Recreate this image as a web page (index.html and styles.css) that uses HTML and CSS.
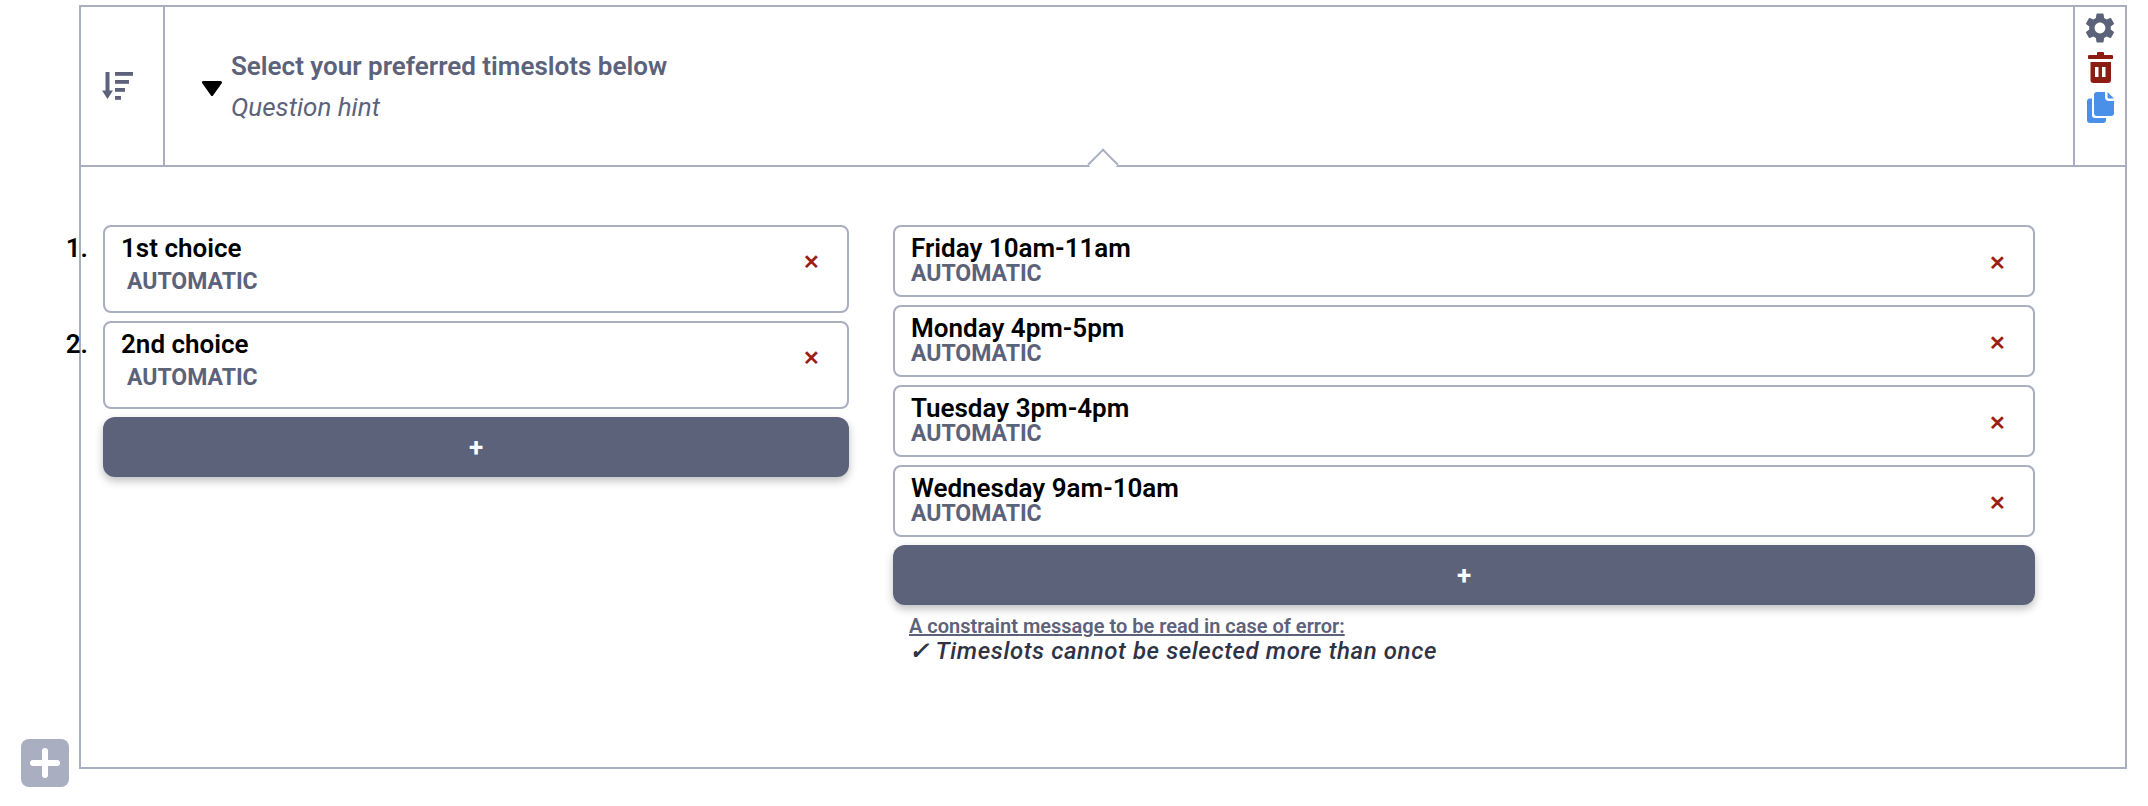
FILE: index.html
```html
<!DOCTYPE html>
<html lang="en">
<head>
<meta charset="utf-8">
<title>Question editor</title>
<link rel="stylesheet" href="styles.css">
</head>
<body>
<div class="page">
  <button class="add-question" aria-label="Add">
    <svg viewBox="0 0 48 48" width="48" height="48"><rect x="21" y="9" width="6" height="30" rx="3"/><rect x="9" y="21" width="30" height="6" rx="3"/></svg>
  </button>
  <section class="question">
    <header class="q-head">
      <div class="q-type">
        <svg viewBox="0 0 32 28" width="32" height="28"><rect x="3.500" y="0" width="4" height="20"/><path d="M0 18.500h11L5.500 27z"/><rect x="13" y="0" width="18" height="3.800"/><rect x="13" y="8" width="14" height="3.800"/><rect x="13" y="16" width="10" height="3.800"/><rect x="13" y="24" width="6" height="3.800"/></svg>
      </div>
      <div class="q-main">
        <svg class="q-caret" viewBox="0 0 20 15" width="20" height="15"><path d="M1.500 1.500h17L10 13.500z"/></svg>
        <div class="q-text">
          <div class="q-label">Select your preferred timeslots below</div>
          <div class="q-hint">Question hint</div>
        </div>
        <span class="q-notch"></span>
      </div>
      <div class="q-tools">
        <svg class="gear" viewBox="0 0 24 24" width="36" height="36"><path d="M19.140 12.940c.04-.3.060-.61.060-.94 0-.32-.02-.64-.07-.94l2.030-1.580c.18-.14.230-.41.120-.61l-1.920-3.320c-.12-.22-.37-.29-.59-.22l-2.390.96c-.5-.38-1.030-.7-1.620-.94l-.36-2.540c-.04-.24-.24-.41-.48-.41h-3.840c-.24 0-.43.170-.47.410l-.36 2.540c-.59.240-1.130.570-1.620.94l-2.390-.96c-.22-.08-.47 0-.59.220L2.740 8.870c-.12.210-.08.470.12.610l2.030 1.580c-.05.3-.09.630-.09.940s.02.640.07.940l-2.030 1.580c-.18.140-.23.410-.12.610l1.920 3.320c.12.220.37.290.59.220l2.390-.96c.5.380 1.030.7 1.620.94l.36 2.540c.05.240.24.410.48.410h3.840c.24 0 .44-.17.47-.41l.36-2.540c.59-.24 1.130-.56 1.620-.94l2.390.96c.22.080.47 0 .59-.22l1.920-3.320c.12-.22.070-.47-.12-.61l-2.010-1.580zM12 15.600c-1.980 0-3.600-1.620-3.600-3.600s1.620-3.600 3.600-3.600 3.600 1.620 3.600 3.600-1.620 3.600-3.600 3.600z"/></svg>
        <svg class="trash" viewBox="0 0 25 31" width="25" height="31"><path d="M10 0h5a1 1 0 0 1 1 1v2h7.500a2 2 0 0 1 0 4H1.500a2 2 0 0 1 0-4H9V1a1 1 0 0 1 1-1z"/><path fill-rule="evenodd" d="M2.500 10H23v18a3 3 0 0 1-3 3H5.500a3 3 0 0 1-3-3zM7 15v10h3.500V15zM14 15v10h3.500V15z"/></svg>
        <svg class="copy" viewBox="0 0 27 31" width="27" height="31"><path d="M3 6.500h2V23a3 3 0 0 0 3 3h11v2a3 3 0 0 1-3 3H3a3 3 0 0 1-3-3V9.500a3 3 0 0 1 3-3z"/><path d="M10 0h8v5a4 4 0 0 0 4 4h5v12a3 3 0 0 1-3 3H10a3 3 0 0 1-3-3V3a3 3 0 0 1 3-3z"/><path d="M20.500 0L27 6.500h-5a1.500 1.500 0 0 1-1.500-1.500z"/></svg>
      </div>
    </header>
    <div class="q-body">
      <div class="col col-rank">
        <ol class="rank-list">
          <li>
            <div class="item item-tall">
              <div class="item-text"><div class="item-title">1st choice</div><div class="item-sub">AUTOMATIC</div></div>
              <span class="item-x">✕</span>
            </div>
          </li>
          <li>
            <div class="item item-tall">
              <div class="item-text"><div class="item-title">2nd choice</div><div class="item-sub">AUTOMATIC</div></div>
              <span class="item-x">✕</span>
            </div>
          </li>
        </ol>
        <button class="add-item">+</button>
      </div>
      <div class="col col-options">
        <div class="item">
          <div class="item-text"><div class="item-title">Friday 10am-11am</div><div class="item-sub">AUTOMATIC</div></div>
          <span class="item-x">✕</span>
        </div>
        <div class="item">
          <div class="item-text"><div class="item-title">Monday 4pm-5pm</div><div class="item-sub">AUTOMATIC</div></div>
          <span class="item-x">✕</span>
        </div>
        <div class="item">
          <div class="item-text"><div class="item-title">Tuesday 3pm-4pm</div><div class="item-sub">AUTOMATIC</div></div>
          <span class="item-x">✕</span>
        </div>
        <div class="item">
          <div class="item-text"><div class="item-title">Wednesday 9am-10am</div><div class="item-sub">AUTOMATIC</div></div>
          <span class="item-x">✕</span>
        </div>
        <button class="add-item">+</button>
        <div class="constraint">
          <div class="constraint-label">A constraint message to be read in case of error:</div>
          <div class="constraint-msg"><span class="check">✓</span> Timeslots cannot be selected more than once</div>
        </div>
      </div>
    </div>
  </section>
</div>
</body>
</html>
```
FILE: styles.css
```css
* { box-sizing: border-box; }
html, body { margin: 0; background: #fff; }
body { font-family: Roboto, "Liberation Sans", sans-serif; color: #000; }
.page { display: flex; padding: 5px 21px 0; }
.add-question {
  flex: none; align-self: flex-end; width: 48px; height: 48px; margin-right: 10px; padding: 0;
  border: 0; border-radius: 8px; background: #a9aec1; display: flex;
}
.add-question svg { fill: #fff; }
.question { flex: 1; height: 764px; margin-bottom: 18px; border: 2px solid #a9aec1; }
.q-head { display: flex; height: 160px; border-bottom: 2px solid #a9aec1; }
.q-type { flex: none; width: 84px; padding-right: 8px; border-right: 2px solid #a9aec1; display: flex; align-items: center; justify-content: center; }
.q-type svg { fill: #5c627a; }
.q-main { flex: 1; position: relative; display: flex; align-items: center; padding-left: 37px; }
.q-caret { flex: none; margin: 5px 9px 0 0; fill: #000; stroke: #000; stroke-width: 3; stroke-linejoin: round; }
.q-label { font-size: 26px; font-weight: 600; color: #5c627a; line-height: 28px; }
.q-hint { margin-top: 13px; font-size: 26px; font-weight: 400; font-style: italic; color: #5c627a; line-height: 28px; }
.q-notch { position: absolute; left: 927px; bottom: -10px; width: 22px; height: 22px; background: #fff; border: 2px solid #a9aec1; border-right: 0; border-bottom: 0; transform: rotate(45deg); }
.q-tools { flex: none; width: 52px; border-left: 2px solid #a9aec1; display: flex; flex-direction: column; align-items: center; padding-top: 3px; }
.gear { flex: none; fill: #5c627a; }
.trash { flex: none; margin-top: 6px; fill: #8f1c12; }
.copy { flex: none; margin-top: 9px; fill: #4a90e8; }
.q-body { display: flex; padding: 58px 90px 0 22px; gap: 44px; }
.col-rank { flex: none; width: 746px; }
.col-options { flex: 1; }
.rank-list { margin: 0; padding: 0; list-style: none; counter-reset: rank; }
.rank-list li { position: relative; margin-bottom: 8px; counter-increment: rank; }
.rank-list li::before {
  content: counter(rank) "."; position: absolute; right: 100%; top: 9px; margin-right: 15px;
  font-size: 26px; font-weight: 600; line-height: 28px;
}
.item {
  display: flex; align-items: center; justify-content: space-between; height: 72px; margin-bottom: 8px;
  padding: 0 27px 0 16px; border: 2px solid #a9aec1; border-radius: 8px; background: #fff;
}
.item-tall { height: 88px; margin-bottom: 0; }
.item-title { font-size: 26px; font-weight: 600; line-height: 26px; color: #000; position: relative; top: -1px; }
.item-sub { font-size: 23px; font-weight: 700; line-height: 24px; color: #5c627a; }
.item-tall .item-text { align-self: flex-start; padding-top: 9px; }
.item-tall .item-sub { margin: 8px 0 0 6px; }
.item-tall .item-x { margin: 0 0 14px; }
.item-x { font-size: 20px; line-height: 1; font-weight: 700; color: #9b2013; margin-top: 4px; }
.add-item {
  display: block; width: 100%; height: 60px; padding: 0; border: 0; border-radius: 12px; background: #5c627a;
  color: #fff; font: 700 26px Roboto, sans-serif; box-shadow: 0 4px 8px rgba(0, 0, 0, .25);
}
.constraint { margin: 9px 0 0 16px; }
.constraint-label { font-size: 20px; font-weight: 600; line-height: 24px; color: #5c627a; text-decoration: underline; }
.constraint-msg { font-size: 24px; font-weight: 500; font-style: italic; line-height: 26px; color: #2f3346; letter-spacing: .6px; }
.check { font-weight: 700; }
```
